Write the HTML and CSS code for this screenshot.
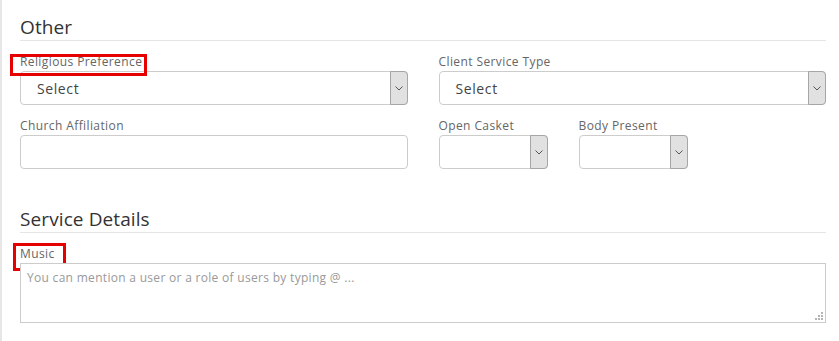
FILE: index.html
```html
<!DOCTYPE html>
<html lang="en">
<head>
    <meta charset="UTF-8">
    <meta name="viewport" content="width=device-width, initial-scale=1.0">
    <title>Service Details</title>
    <link rel="stylesheet" href="styles.css">
</head>
<body>

    <div class="page">

        <h2 class="section-title">Other</h2>

        <div class="form-grid">
            <div class="field">
                <label class="field-label"><span class="mark mark-religion">Religious Preference</span></label>
                <div class="select">
                    <span class="select-value">Select</span>
                    <span class="select-arrow">
                        <svg width="8" height="5" viewBox="0 0 8 5"><polyline points="0.5,0.5 4,4 7.5,0.5" fill="none" stroke="#555" stroke-width="1"/></svg>
                    </span>
                </div>
            </div>

            <div class="field">
                <label class="field-label">Client Service Type</label>
                <div class="select">
                    <span class="select-value">Select</span>
                    <span class="select-arrow">
                        <svg width="8" height="5" viewBox="0 0 8 5"><polyline points="0.5,0.5 4,4 7.5,0.5" fill="none" stroke="#555" stroke-width="1"/></svg>
                    </span>
                </div>
            </div>

            <div class="field">
                <label class="field-label">Church Affiliation</label>
                <input type="text" class="input">
            </div>

            <div class="field-row">
                <div class="field small">
                    <label class="field-label">Open Casket</label>
                    <div class="select">
                        <span class="select-value"></span>
                        <span class="select-arrow">
                            <svg width="8" height="5" viewBox="0 0 8 5"><polyline points="0.5,0.5 4,4 7.5,0.5" fill="none" stroke="#555" stroke-width="1"/></svg>
                        </span>
                    </div>
                </div>
                <div class="field small">
                    <label class="field-label">Body Present</label>
                    <div class="select">
                        <span class="select-value"></span>
                        <span class="select-arrow">
                            <svg width="8" height="5" viewBox="0 0 8 5"><polyline points="0.5,0.5 4,4 7.5,0.5" fill="none" stroke="#555" stroke-width="1"/></svg>
                        </span>
                    </div>
                </div>
            </div>
        </div>

        <h2 class="section-title second">Service Details</h2>

        <div class="field music">
            <label class="field-label"><span class="mark mark-music">Music</span></label>
            <div class="textarea-wrap">
                <textarea class="textarea" placeholder="You can mention a user or a role of users by typing @ ..."></textarea>
                <svg class="grip" width="8" height="8" viewBox="0 0 8 8">
                    <rect x="6" y="0" width="2" height="2"/>
                    <rect x="3" y="3" width="2" height="2"/>
                    <rect x="6" y="3" width="2" height="2"/>
                    <rect x="0" y="6" width="2" height="2"/>
                    <rect x="3" y="6" width="2" height="2"/>
                    <rect x="6" y="6" width="2" height="2"/>
                </svg>
            </div>
        </div>

    </div>

</body>
</html>
```

FILE: styles.css
```css
 body {
     margin: 0;
     font-family: "Open Sans", Arial, sans-serif;
     color: #333;
     background: #fff;
 }

 .page {
     border-left: 2px solid #e6e6e6;
     padding: 15px 13px 0 18px;
     min-height: 326px;
 }

 .section-title {
     font-size: 19px;
     font-weight: 400;
     line-height: 24px;
     color: #333;
     margin: 0;
     padding-bottom: 1px;
     border-bottom: 1px solid #e5e5e5;
     letter-spacing: 0.1px;
 }

 .section-title.second {
     margin-top: 38px;
 }

 .form-grid {
     display: grid;
     grid-template-columns: 1fr 1fr;
     column-gap: 31px;
     row-gap: 13px;
     margin-top: 13px;
 }

 .field-row {
     display: flex;
     gap: 31px;
 }

 .field.small {
     width: 109px;
 }

 .field-label {
     display: block;
     font-size: 12px;
     line-height: 16px;
     color: #666;
     margin-bottom: 1px;
     letter-spacing: 0.4px;
 }

 /* red annotation boxes */
 .mark {
     position: relative;
     display: inline-block;
 }

 .mark::before {
     content: "";
     position: absolute;
     border: 3px solid #e60000;
 }

 .mark-religion::before {
     left: -10px;
     right: -5px;
     top: 0;
     bottom: -6px;
 }

 .mark-music::before {
     left: -7px;
     right: -11px;
     top: -3px;
     bottom: -9px;
 }

 .select {
     display: flex;
     align-items: center;
     height: 34px;
     box-sizing: border-box;
     border: 1px solid #ccc;
     border-radius: 4px;
     background: #fff;
 }

 .select-value {
     flex: 1;
     padding: 1px 0 0 16px;
     font-size: 14px;
     line-height: 20px;
     color: #444;
     letter-spacing: 0.6px;
 }

 .select-arrow {
     align-self: stretch;
     display: flex;
     align-items: center;
     justify-content: center;
     width: 16px;
     margin: -1px -1px -1px 0;
     border: 1px solid #a6a6a6;
     border-radius: 0 4px 4px 0;
     background: #e1e1e1;
 }

 .input {
     display: block;
     width: 100%;
     height: 34px;
     box-sizing: border-box;
     border: 1px solid #ccc;
     border-radius: 4px;
     font-family: inherit;
     font-size: 14px;
     padding: 0 12px;
     margin: 0;
 }

 .music {
     margin-top: 13px;
 }

 .textarea-wrap {
     position: relative;
 }

 .textarea {
     display: block;
     width: 100%;
     height: 60px;
     box-sizing: border-box;
     border: 1px solid #ccc;
     border-radius: 0;
     padding: 6px 6px;
     margin: 0;
     font-family: inherit;
     font-size: 12px;
     line-height: 16px;
     letter-spacing: 0.3px;
     resize: none;
 }

 .textarea::placeholder {
     color: #999;
 }

 .grip {
     position: absolute;
     right: 3px;
     bottom: 3px;
     fill: #b5b5b5;
 }
```
